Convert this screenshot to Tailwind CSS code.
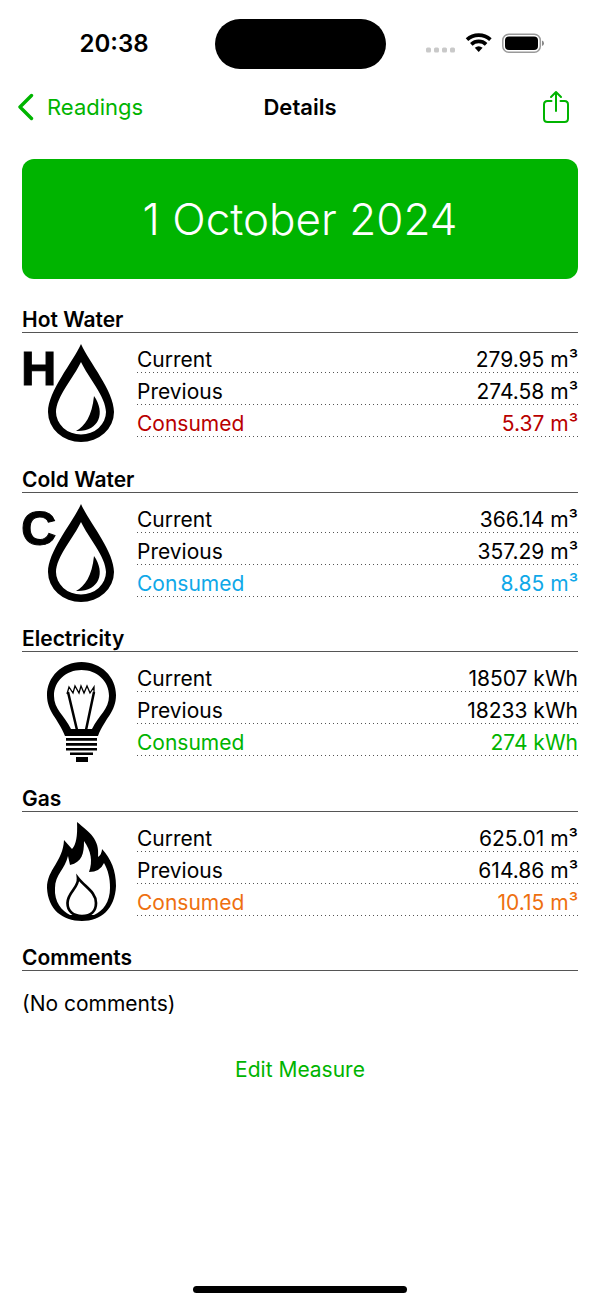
<!DOCTYPE html>
<html lang="en">
<head>
<meta charset="utf-8">
<meta name="viewport" content="width=device-width, initial-scale=1">
<title>Details</title>
<script src="https://cdn.jsdelivr.net/npm/@tailwindcss/browser@4"></script>
</head>
<body class="flex min-h-screen flex-col bg-white font-['Inter',sans-serif] text-[22px] text-black">
<div class="grid h-[88px] grid-cols-3 items-center" aria-label="Status bar">
  <div class="pl-7 text-center text-2xl font-semibold">20:38</div>
  <div class="mx-auto h-[50px] w-[171px] rounded-full bg-black"></div>
  <div class="flex items-center justify-end pr-14">
    <svg class="h-6 w-[119px]" viewBox="0 0 119 24" aria-hidden="true">
      <g fill="#c9c9c9"><rect x="1" y="15.500" width="5" height="5" rx="1.500"/><rect x="9" y="15.500" width="5" height="5" rx="1.500"/><rect x="17" y="15.500" width="5" height="5" rx="1.500"/><rect x="25" y="15.500" width="5" height="5" rx="1.500"/></g>
      <g fill="none" stroke="#000" stroke-width="3.700"><path d="M42 7.600a17.300 17.300 0 0 1 23.400 0"/><path d="M46.300 12.400a10.800 10.800 0 0 1 14.800 0"/></g>
      <path d="M49.800 15.800a6 6 0 0 1 7.800 0L53.700 20z"/>
      <rect x="77.800" y="2.300" width="37.500" height="18" rx="6" fill="none" stroke="#999" stroke-width="1.500"/>
      <rect x="80" y="4.500" width="33" height="13.600" rx="4"/>
      <path d="M117 8.500q2 .7 2 2.800t-2 2.800z" fill="#888"/>
    </svg>
  </div>
</div>
<header class="grid h-[38px] grid-cols-3 items-center">
  <a href="#readings" class="flex items-center gap-[13px] pl-[18px] text-[#00b400]">
    <svg class="h-7 w-4" viewBox="0 0 16 28" fill="none" stroke="currentColor" stroke-width="3.400" stroke-linecap="round" stroke-linejoin="round" aria-hidden="true"><path d="M13.500 2.500 2 14 13.500 25.500"/></svg>
    Readings
  </a>
  <h1 class="text-center font-semibold">Details</h1>
  <button type="button" aria-label="Share" class="mr-[30px] justify-self-end text-[#00b400]">
    <svg class="h-[34px] w-7" viewBox="0 0 28 34" fill="none" stroke="currentColor" stroke-width="2" stroke-linecap="round" stroke-linejoin="round" aria-hidden="true"><path d="M9.500 11H5.500Q2 11 2 14.500V28.500Q2 32 5.500 32H22.500Q26 32 26 28.500V14.500Q26 11 22.500 11H18.500M14 21V2M9 7l5-5 5 5"/></svg>
  </button>
</header>
<main class="flex flex-col px-[22px] pt-[33px] text-[21px]">
  <h2 class="flex h-[120px] items-center justify-center rounded-xl bg-[#00b400] text-[44px] font-light text-white">1 October 2024</h2>

  <section class="mt-7 h-40">
    <h3 class="h-[26px] border-b border-[#555] leading-[26px] font-semibold">Hot Water</h3>
    <div class="flex pt-2">
      <svg class="h-[104px] w-[115px] shrink-0" viewBox="0 1 115 104" role="img" aria-label="Hot water">
        <text x="-1" y="45" font-family="Liberation Sans" font-weight="700" font-size="49" stroke="#000" stroke-width="1">H</text>
        <path fill-rule="evenodd" d="M59 4C51 22 26 51 26 72a33 30 0 0 0 66 0C92 51 67 22 59 4ZM59 22C52 37 34 57 34 72a25 22.500 0 0 0 50 0C84 57 66 37 59 22Z"/>
        <path d="M72 56C84 73 77 92 54 91C63 86 70 76 72 56Z"/>
      </svg>
      <dl class="flex-1 leading-8">
        <div class="flex h-8 justify-between bg-[repeating-linear-gradient(to_right,#555_0_1px,transparent_1px_4px)] bg-[length:100%_1px] bg-bottom bg-no-repeat pt-[3px]"><dt>Current</dt><dd>279.95 m³</dd></div>
        <div class="flex h-8 justify-between bg-[repeating-linear-gradient(to_right,#555_0_1px,transparent_1px_4px)] bg-[length:100%_1px] bg-bottom bg-no-repeat pt-[3px]"><dt>Previous</dt><dd>274.58 m³</dd></div>
        <div class="flex h-8 justify-between bg-[repeating-linear-gradient(to_right,#555_0_1px,transparent_1px_4px)] bg-[length:100%_1px] bg-bottom bg-no-repeat pt-[3px] text-[#b90000]"><dt>Consumed</dt><dd>5.37 m³</dd></div>
      </dl>
    </div>
  </section>

  <section class="h-[159px]">
    <h3 class="h-[26px] border-b border-[#555] leading-[26px] font-semibold">Cold Water</h3>
    <div class="flex pt-2">
      <svg class="h-[104px] w-[115px] shrink-0" viewBox="0 1 115 104" role="img" aria-label="Cold water">
        <text x="-1" y="45" font-family="Liberation Sans" font-weight="700" font-size="49" stroke="#000" stroke-width="1">C</text>
        <path fill-rule="evenodd" d="M59 4C51 22 26 51 26 72a33 30 0 0 0 66 0C92 51 67 22 59 4ZM59 22C52 37 34 57 34 72a25 22.500 0 0 0 50 0C84 57 66 37 59 22Z"/>
        <path d="M72 56C84 73 77 92 54 91C63 86 70 76 72 56Z"/>
      </svg>
      <dl class="flex-1 leading-8">
        <div class="flex h-8 justify-between bg-[repeating-linear-gradient(to_right,#555_0_1px,transparent_1px_4px)] bg-[length:100%_1px] bg-bottom bg-no-repeat pt-[3px]"><dt>Current</dt><dd>366.14 m³</dd></div>
        <div class="flex h-8 justify-between bg-[repeating-linear-gradient(to_right,#555_0_1px,transparent_1px_4px)] bg-[length:100%_1px] bg-bottom bg-no-repeat pt-[3px]"><dt>Previous</dt><dd>357.29 m³</dd></div>
        <div class="flex h-8 justify-between bg-[repeating-linear-gradient(to_right,#555_0_1px,transparent_1px_4px)] bg-[length:100%_1px] bg-bottom bg-no-repeat pt-[3px] text-[#10a8e8]"><dt>Consumed</dt><dd>8.85 m³</dd></div>
      </dl>
    </div>
  </section>

  <section class="h-40">
    <h3 class="h-[26px] border-b border-[#555] leading-[26px] font-semibold">Electricity</h3>
    <div class="flex pt-2">
      <svg class="h-[104px] w-[115px] shrink-0" viewBox="0 0 115 104" role="img" aria-label="Electricity">
        <path fill-rule="evenodd" d="M59.500 2C40 2 25 17 25 35C25 52 36 58 43 76H76C83 58 94 52 94 35C94 17 79 2 59.500 2ZM59.500 10C44 10 32 21 32 36C32 49 42 55 49 69H70C77 55 87 49 87 36C87 21 75 10 59.500 10Z"/>
        <path d="M46 32 55 70M72 32 64 70" fill="none" stroke="#000" stroke-width="2.500"/>
        <path d="M45 34 47 27 51 33 53 26 57 33 59 26 62 33 65 26 68 33 72 27 72 34" fill="none" stroke="#000" stroke-width="1.300"/>
        <path d="M44 78h31v2.700H44zM44 83h31v2.700H44zM44 88h31v2.500H44zM48 92.500h23v2.500H48zM54 97h12v5H54z"/>
      </svg>
      <dl class="flex-1 leading-8">
        <div class="flex h-8 justify-between bg-[repeating-linear-gradient(to_right,#555_0_1px,transparent_1px_4px)] bg-[length:100%_1px] bg-bottom bg-no-repeat pt-[3px]"><dt>Current</dt><dd>18507 kWh</dd></div>
        <div class="flex h-8 justify-between bg-[repeating-linear-gradient(to_right,#555_0_1px,transparent_1px_4px)] bg-[length:100%_1px] bg-bottom bg-no-repeat pt-[3px]"><dt>Previous</dt><dd>18233 kWh</dd></div>
        <div class="flex h-8 justify-between bg-[repeating-linear-gradient(to_right,#555_0_1px,transparent_1px_4px)] bg-[length:100%_1px] bg-bottom bg-no-repeat pt-[3px] text-[#00b400]"><dt>Consumed</dt><dd>274 kWh</dd></div>
      </dl>
    </div>
  </section>

  <section class="h-[159px]">
    <h3 class="h-[26px] border-b border-[#555] leading-[26px] font-semibold">Gas</h3>
    <div class="flex pt-2">
      <svg class="h-[104px] w-[115px] shrink-0" viewBox="0 0 115 104" role="img" aria-label="Gas">
        <path fill-rule="evenodd" d="M55 2C67 12 78 19 76 37Q80 34 80 29C89 39 94 50 94 66C93 89 79 101 60 101C40 101 26 89 25 68C25 49 41 42 42 20L50 29Q56 23 55 2ZM62 21C62 34 60 42 48 45L46 36C43 49 33 55 33 68C32 82 40 91 48 95H72C81 91 88 82 88 68C88 58 86 50 82 43Q78 52 67 52C71 41 69 31 62 21Z"/>
        <path d="M56 58C57 68 45.500 72 45.500 83C45.500 91 51 96 60 96S74 91 74 83C74 72 63 67 56 58Z" fill="#fff" stroke="#000" stroke-width="2.700"/>
      </svg>
      <dl class="flex-1 leading-8">
        <div class="flex h-8 justify-between bg-[repeating-linear-gradient(to_right,#555_0_1px,transparent_1px_4px)] bg-[length:100%_1px] bg-bottom bg-no-repeat pt-[3px]"><dt>Current</dt><dd>625.01 m³</dd></div>
        <div class="flex h-8 justify-between bg-[repeating-linear-gradient(to_right,#555_0_1px,transparent_1px_4px)] bg-[length:100%_1px] bg-bottom bg-no-repeat pt-[3px]"><dt>Previous</dt><dd>614.86 m³</dd></div>
        <div class="flex h-8 justify-between bg-[repeating-linear-gradient(to_right,#555_0_1px,transparent_1px_4px)] bg-[length:100%_1px] bg-bottom bg-no-repeat pt-[3px] text-[#ee7010]"><dt>Consumed</dt><dd>10.15 m³</dd></div>
      </dl>
    </div>
  </section>

  <section>
    <h3 class="h-[26px] border-b border-[#555] leading-[26px] font-semibold">Comments</h3>
    <p class="pt-[17px] leading-8">(No comments)</p>
  </section>
  <button type="button" class="mt-[34px] self-center leading-8 text-[#00b400]">Edit Measure</button>
</main>
<div class="mx-auto mt-auto mb-[11px] h-[7px] w-[214px] rounded-full bg-black"></div>
</body>
</html>
